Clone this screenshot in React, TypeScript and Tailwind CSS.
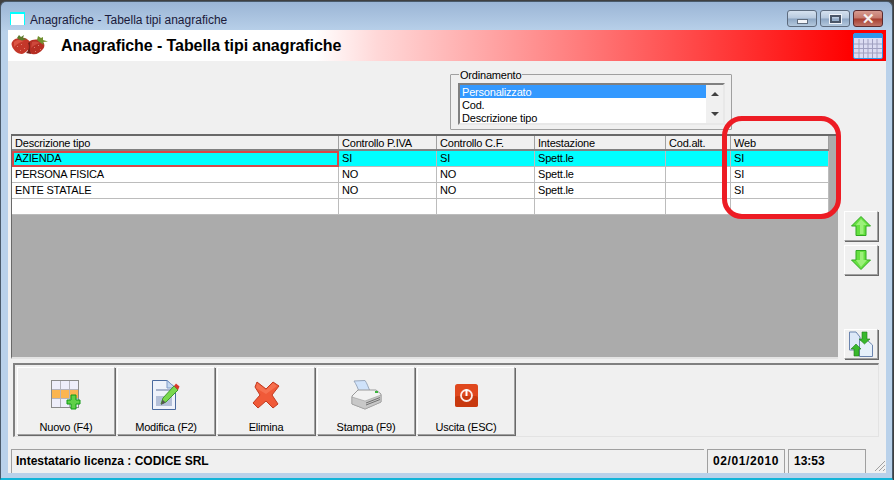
import React from "react";

const font = "font-['Liberation_Sans',Arial,sans-serif]";

const raised = "border border-t-white border-l-white border-r-[#a0a0a0] border-b-[#a0a0a0] shadow-[1px_1px_0_#696969]";

function Strawberries() {
  return (
    <svg width="38" height="21" viewBox="0 0 38 21">
      <path d="M0.5 10 C1 6 5 4 9 4 C13 3 18 5 19.5 9 C20 14 15 19 11 20 C6 20 1 15 0.5 10 Z" fill="#c4372a" />
      <path d="M18 8 C21 5 27 5 31 7 C34 9 34 13 32 15 C29 19 25 21 21 20 C17 19 15 15 18 8 Z" fill="#b62f24" />
      <path d="M17 9 C19 12 18 17 15 19 L20 20 C18 16 19 12 19 8 Z" fill="#70201a" />
      <path d="M3 8 C6 5 10 6 13 7 C9 8 6 10 3 13 Z" fill="#e4604e" opacity="0.75" />
      <path d="M21 8 C24 7 27 8 29 9 C26 10 23 11 20 14 Z" fill="#dc5648" opacity="0.65" />
      <path d="M6 4 L8 1 L10 3 L13 1 L12 4 L16 5 L11 6.5 L8 5.5 Z" fill="#5d7a2c" />
      <path d="M26 6 L27 2 L30 4 L32 3 L32 6 L37 7.5 L32 8 L33 11 L29 8.5 Z" fill="#71902f" />
      <g fill="#f0a090" opacity="0.7">
        <rect x="6" y="12" width="1" height="1" /><rect x="10" y="10" width="1" height="1" /><rect x="13" y="14" width="1" height="1" />
        <rect x="9" y="16" width="1" height="1" /><rect x="23" y="13" width="1" height="1" /><rect x="27" y="11" width="1" height="1" />
        <rect x="29" y="15" width="1" height="1" /><rect x="24" y="17" width="1" height="1" />
      </g>
    </svg>
  );
}

function CalendarIcon() {
  const lines = [];
  for (let i = 1; i < 6; i++) lines.push(<rect key={"v" + i} x={1 + i * 4.5} y="6" width="1" height="19" fill="#a0a0c0" />);
  for (let i = 1; i < 4; i++) lines.push(<rect key={"h" + i} x="1" y={6 + i * 4.5} width="28" height="1" fill="#a0a0c0" />);
  return (
    <svg width="30" height="26" viewBox="0 0 30 26">
      <rect x="0.5" y="0.5" width="29" height="25" rx="1.5" fill="#dcdcf2" stroke="#2f97ea" />
      <rect x="1" y="1" width="28" height="4" fill="#2f97ea" />
      {lines}
    </svg>
  );
}

function NewIcon() {
  return (
    <svg width="30" height="30" viewBox="0 0 30 30">
      <rect x="0.5" y="0.5" width="27" height="27" fill="#eeeefa" stroke="#8a8a8a" />
      <rect x="1" y="9" width="26" height="9" fill="#fbb550" />
      <path d="M9.5 1V27M18.5 1V27M1 9.5H27M1 18.5H27" stroke="#b4b4bc" fill="none" />
      <path d="M20 15h5v5h4v4h-4v5h-5v-5h-4v-4h4z" fill="#5fd048" stroke="#0f9a14" />
    </svg>
  );
}

function EditIcon() {
  return (
    <svg width="28" height="30" viewBox="0 0 28 30">
      <path d="M0.5 0.5H15L23.5 8V29.5H0.5Z" fill="#eef2fa" stroke="#4a6a9e" />
      <path d="M15 0.5V8H23.5Z" fill="#c4d8f0" stroke="#7f9ac8" />
      <rect x="4" y="9" width="15" height="2" fill="#a9b4cc" />
      <rect x="4" y="16" width="16" height="10" fill="#b4c0d8" />
      <path d="M9 24L11 18L22 6L26 10L14 22Z" fill="#7ad84e" stroke="#3f9a2a" />
      <path d="M22 6L24 3.5L27.5 6.5L26 10Z" fill="#d8382a" />
      <path d="M9 25L10.5 19.5L13.5 22.5Z" fill="#555" />
    </svg>
  );
}

function DeleteIcon() {
  return (
    <svg width="28" height="28" viewBox="0 0 28 28">
      <path d="M5 1L14 8L21 1L27 5L20 14L26 23L21 27L14 20L6 27L1 22L8 14L3 6Z" fill="#f05a38" stroke="#c23a20" strokeLinejoin="round" />
      <path d="M5 2L14 9L21 2L25 5L14 13L4 7Z" fill="#fa8060" opacity="0.6" />
    </svg>
  );
}

function PrintIcon() {
  return (
    <svg width="31" height="30" viewBox="0 0 31 30">
      <path d="M3 1L14 0.5C16 3 17 7 19 11L8 12C7 8 5 4 3 1Z" fill="#cfe2fa" stroke="#9aa8bc" />
      <path d="M1 16L7 10H25L30 14V22L14 29L1 24Z" fill="#f2f2f2" stroke="#9a9a9a" />
      <path d="M1 17L14 21L30 15V22L14 29L1 24Z" fill="#c8c8c8" stroke="#9a9a9a" strokeWidth="0.6" />
      <path d="M15 23L29 17.5M15 25L29 19.5" stroke="#707070" fill="none" />
      <rect x="24" y="11" width="3" height="2" fill="#3cb43c" />
    </svg>
  );
}

function ExitIcon() {
  return (
    <svg width="23" height="23" viewBox="0 0 23 23">
      <rect x="0" y="0" width="23" height="23" rx="2.5" fill="#e0481e" />
      <rect x="0" y="12" width="23" height="11" rx="2.5" fill="#c8390f" />
      <circle cx="11.5" cy="11.5" r="5.5" fill="none" stroke="#fff" strokeWidth="1.8" opacity="0.9" />
      <rect x="10.5" y="5" width="2" height="7" fill="#fff" />
    </svg>
  );
}

function ArrowUp() {
  return (
    <svg width="20" height="20" viewBox="0 0 20 20">
      <path d="M10 0.5L19.5 10H15V19.5H5V10H0.5Z" fill="#66e040" stroke="#30a820" />
      <path d="M10 3L16 9H12.5V18H9V9H5Z" fill="#9cf07a" />
    </svg>
  );
}

function ArrowDown() {
  return (
    <svg width="20" height="20" viewBox="0 0 20 20">
      <path d="M10 19.5L19.5 10H15V0.5H5V10H0.5Z" fill="#66e040" stroke="#30a820" />
      <path d="M10 17L16 10H12.5V2H9V10H5Z" fill="#9cf07a" />
    </svg>
  );
}

function RefreshIcon() {
  return (
    <svg width="24" height="26" viewBox="0 0 24 26">
      <path d="M0.5 1H7L11 6V19H0.5Z" fill="#dde8f8" stroke="#6b84ae" />
      <path d="M10.5 9H18L23.5 14V25.5H10.5Z" fill="#e6f0fa" stroke="#6b84ae" />
      <path d="M13 1H18V8H21L15.5 13L10 8H13Z" fill="#38b82c" stroke="#1e7a1a" strokeWidth="0.6" />
      <path d="M7 13L12 18H10V25H5V18H2Z" fill="#38b82c" stroke="#1e7a1a" strokeWidth="0.6" />
    </svg>
  );
}

function CaptionButton({ w, kind }: { w: string; kind: "min" | "max" | "close" }) {
  const bg =
    kind === "close"
      ? "bg-[linear-gradient(#d69a90_0%,#c4786c_48%,#a63c2e_52%,#c07468_100%)] border-[#5a2a2e]"
      : "bg-[linear-gradient(#d5e1ef_0%,#b7c9de_48%,#8da6c3_52%,#b3c8dd_100%)] border-[#5d6b7e]";
  return (
    <div className={`${w} h-[17px] border rounded-[3px] flex items-center justify-center ${bg}`}>
      {kind === "min" && <div className="w-[11px] h-[5px] mt-[5px] bg-[#f2f4f8] border border-[#5f6c7e]" />}
      {kind === "max" && <div className="w-[11px] h-[8px] bg-transparent border-2 border-[#4a5668] outline outline-1 outline-[#eef2f8]" />}
      {kind === "close" && <span className={`${font} text-[15px] leading-none font-bold text-[#f6f0f0]`}>✕</span>}
    </div>
  );
}

const columns = [
  { label: "Descrizione tipo", w: "w-[327px]" },
  { label: "Controllo P.IVA", w: "w-[98px]" },
  { label: "Controllo C.F.", w: "w-[98px]" },
  { label: "Intestazione", w: "w-[131px]" },
  { label: "Cod.alt.", w: "w-[65px]" },
  { label: "Web", w: "w-[98px]" },
];

const rows = [
  ["AZIENDA", "SI", "SI", "Spett.le", "", "SI"],
  ["PERSONA FISICA", "NO", "NO", "Spett.le", "", "SI"],
  ["ENTE STATALE", "NO", "NO", "Spett.le", "", "SI"],
  ["", "", "", "", "", ""],
];

function Grid() {
  return (
    <div className="w-[827px] h-[225px] bg-[#ababab] border-t-2 border-l border-b-2 border-t-[#696969] border-l-[#696969] border-b-[#e3e3e3] overflow-hidden tracking-[-0.2px]">
      <div className="flex h-[13px] w-[817px] border-b-2 border-[#808080] box-content">
        {columns.map((c) => (
          <div key={c.label} className={`${c.w} shrink-0 bg-[#f0f0f0] border-r border-[#a0a0a0] pl-[3px] text-[11px] leading-[14px] text-black`}>
            {c.label}
          </div>
        ))}
      </div>
      {rows.map((r, i) => (
        <div key={i} className={`flex h-[16px] w-[817px] ${i === 0 ? "bg-[#00ffff]" : "bg-white"}`}>
          {r.map((cell, j) =>
            i === 0 && j === 0 ? (
              <div key={j} className={`${columns[j].w} shrink-0 border-2 border-[#d84848] pl-[1px] text-[11px] leading-[11px] text-black`}>
                {cell}
              </div>
            ) : (
              <div key={j} className={`${columns[j].w} shrink-0 border-r border-b border-[#bcbcbc] pl-[3px] text-[11px] leading-[15px] text-black`}>
                {cell}
              </div>
            )
          )}
        </div>
      ))}
    </div>
  );
}

function ToolButton({ label, icon }: { label: string; icon: React.ReactNode }) {
  return (
    <div className={`w-[98px] h-[68px] flex flex-col items-center bg-[#f0f0f0] ${raised}`}>
      <div className="h-[44px] mt-[5px] flex items-center justify-center">{icon}</div>
      <div className="text-[11px] leading-[13px] mt-[4px] text-black tracking-[-0.2px]">{label}</div>
    </div>
  );
}

function SideButton({ children, className = "" }: { children: React.ReactNode; className?: string }) {
  return <div className={`w-[34px] h-[30px] flex items-center justify-center bg-[#f0f0f0] ${raised} ${className}`}>{children}</div>;
}

export default function App() {
  return (
    <div className={`${font} relative w-[894px] h-[480px] overflow-hidden bg-[#404040]`}>
      <div className="w-[893px] h-[479px] mt-[1px] rounded-t-[6px] border border-[#4a5a6a] border-b-[#12b4d8] border-b-2 bg-[linear-gradient(#9bb5d5_0px,#b9d1ea_30px)] pl-[7px] pb-[5px] flex flex-col">
        {/* title bar */}
        <div className="h-[28px] shrink-0 flex items-start">
          <div className="w-[15px] h-[13px] mt-[10px] ml-[2px] bg-white border-t-2 border-x border-[#00ffff]" />
          <div className="ml-[5px] mt-[11px] text-[12px] leading-[14px] text-[#1a1a3a]">Anagrafiche - Tabella tipi anagrafiche</div>
          <div className="ml-auto mr-[9px] mt-[8px] flex gap-[3px]">
            <CaptionButton w="w-[30px]" kind="min" />
            <CaptionButton w="w-[30px]" kind="max" />
            <CaptionButton w="w-[30px]" kind="close" />
          </div>
        </div>

        {/* client */}
        <div className="flex-1 flex flex-col bg-[#f0f0f0] w-[878px]">
          {/* banner */}
          <div className="h-[31px] shrink-0 flex items-center bg-[linear-gradient(90deg,#ffffff_35%,#ffd8d8_42%,#ff0000_96%)]">
            <div className="ml-[3px] mt-[-2px]"><Strawberries /></div>
            <div className="ml-[12px] text-[16px] font-bold leading-none text-black tracking-[-0.08px]">Anagrafiche - Tabella tipi anagrafiche</div>
            <div className="ml-auto mr-[3px]"><CalendarIcon /></div>
          </div>

          {/* sort group */}
          <div className="mt-[13px] ml-[442px] w-[282px] h-[56px] border border-[#a0a0a0] rounded-[1px] relative shrink-0">
            <div className="absolute left-[8px] -top-[5px] bg-[#f0f0f0] px-[1px] text-[11px] leading-[11px] text-black tracking-[-0.2px]">Ordinamento</div>
            <div className="mt-[8px] ml-[7px] w-[267px] h-[42px] border-2 border-t-[#808080] border-l-[#808080] border-r-[#e8e8e8] border-b-[#e8e8e8] bg-white flex">
              <div className="flex-1 text-[11px] leading-[15px] text-black tracking-[-0.2px]">
                <div className="bg-[#3399ff] text-white pl-[2px] h-[13px]">Personalizzato</div>
                <div className="pl-[2px] h-[13px]">Cod.</div>
                <div className="pl-[2px] h-[13px]">Descrizione tipo</div>
              </div>
              <div className="w-[17px] bg-[#f0f0f0] flex flex-col items-center justify-between py-[7px]">
                <div className="w-0 h-0 border-x-[4px] border-x-transparent border-b-[4px] border-b-[#404040]" />
                <div className="w-0 h-0 border-x-[4px] border-x-transparent border-t-[4px] border-t-[#404040]" />
              </div>
            </div>
          </div>

          {/* grid + side */}
          <div className="flex mt-[4px] ml-[3px] h-[225px] shrink-0">
            <Grid />
            <div className="ml-[6px] flex flex-col pt-[77px]">
              <SideButton><ArrowUp /></SideButton>
              <SideButton className="mt-[4px]"><ArrowDown /></SideButton>
              <SideButton className="mt-[54px]"><RefreshIcon /></SideButton>
            </div>
          </div>

          {/* toolbar */}
          <div className="mt-[4px] ml-[5px] w-[866px] h-[74px] shrink-0 border-t-2 border-l-2 border-[#808080] border-r border-r-[#e3e3e3] border-b border-b-[#e3e3e3] flex gap-[2px] pl-[2px] pt-[2px]">
            <ToolButton label="Nuovo (F4)" icon={<NewIcon />} />
            <ToolButton label="Modifica (F2)" icon={<EditIcon />} />
            <ToolButton label="Elimina" icon={<DeleteIcon />} />
            <ToolButton label="Stampa (F9)" icon={<PrintIcon />} />
            <ToolButton label="Uscita (ESC)" icon={<ExitIcon />} />
          </div>

          {/* status */}
          <div className="mt-[12px] ml-[3px] flex gap-[3px] flex-1 text-[12px] font-bold text-black">
            <div className="w-[693px] border-t border-l border-[#a0a0a0] pl-[4px] pt-[4px] leading-[14px]">Intestatario licenza : CODICE SRL</div>
            <div className="w-[78px] border-t border-l border-r border-[#a0a0a0] pl-[5px] pt-[4px] leading-[14px] tracking-[0.6px]">02/01/2010</div>
            <div className="w-[78px] border-t border-l border-r border-[#a0a0a0] pl-[5px] pt-[4px] leading-[14px]">13:53</div>
          </div>
        </div>
      </div>

      {/* resize grip */}
      <svg className="absolute left-[874px] top-[461px]" width="12" height="11" viewBox="0 0 12 11">
        <path d="M1 10L11 0M5 10L11 4M9 10L11 8" stroke="#a0a0a0" fill="none" />
      </svg>

      {/* hand-drawn annotation */}
      <div className="absolute left-[722px] top-[116px] w-[119px] h-[103px] border-[5px] border-[#ed1c24] rounded-[20px]" />
    </div>
  );
}
